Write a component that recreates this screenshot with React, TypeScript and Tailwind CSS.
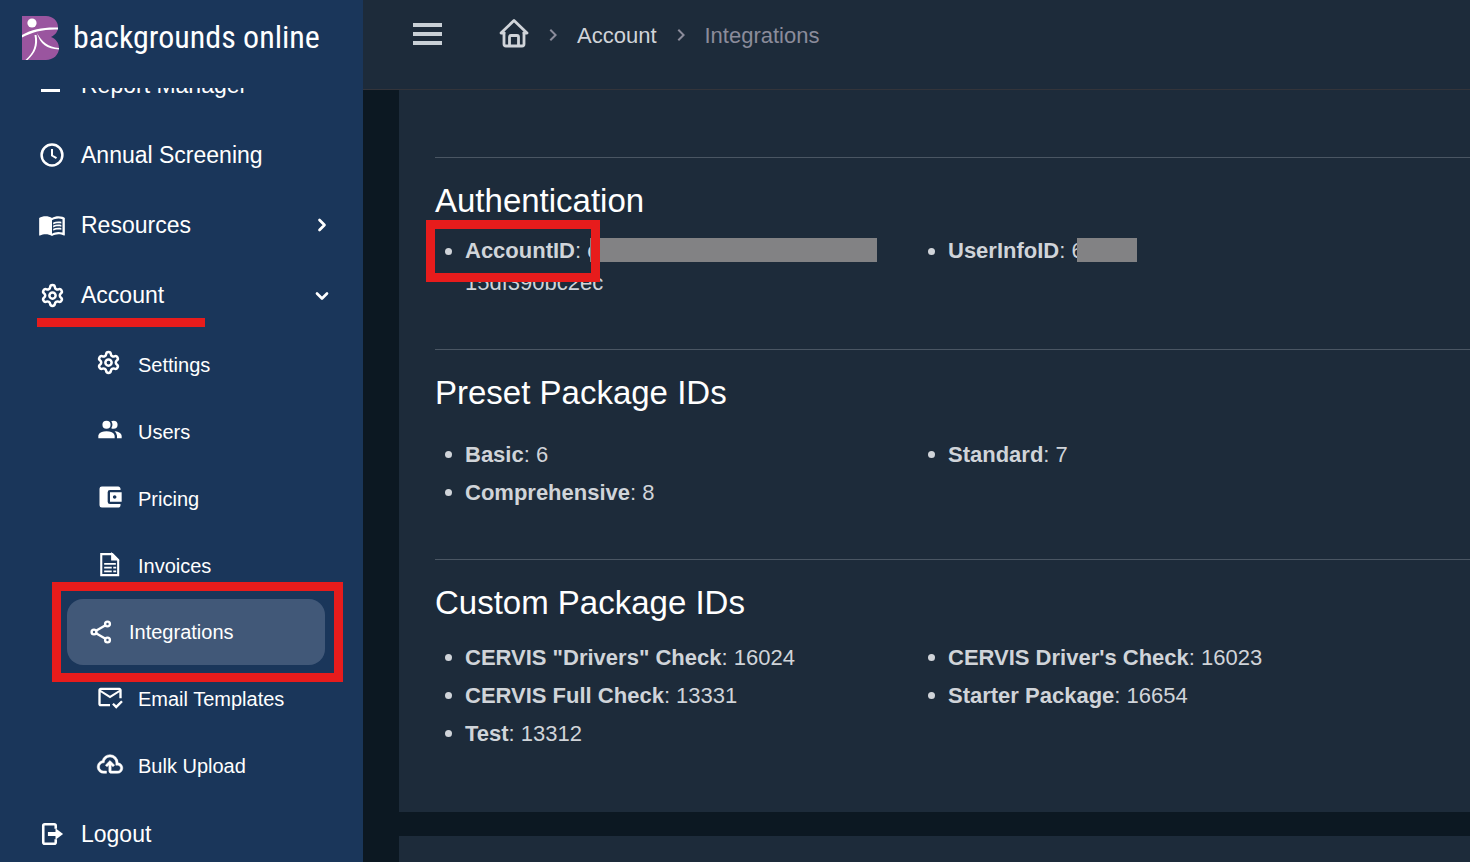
import { ChevronDown, ChevronRight, Settings } from "lucide-react";
import { MdMenuBook, MdAccountBalanceWallet, MdOutlineMarkEmailRead, MdChevronRight } from "react-icons/md";

const HomeIcon = () => (
    <svg width="30" height="30" viewBox="0 0 30 30" fill="none" stroke="currentColor" strokeWidth="2.8" strokeLinejoin="round">
        <path d="M5 15H2L15 2.500 28 15h-3" strokeLinecap="round" />
        <path d="M5 14v12q0 2 2 2h16q2 0 2-2V14" />
        <path d="M10.500 28V19q0-1.500 1.500-1.500h6q1.500 0 1.500 1.500v9" />
    </svg>
);

const ClockIcon = () => (
    <svg width="28" height="28" viewBox="0 0 28 28" fill="none" stroke="currentColor" strokeWidth="2.5">
        <circle cx="14" cy="14" r="10.400" />
        <path d="M14 8v6.500l4.500 2.700" strokeWidth="2" />
    </svg>
);

const UsersIcon = () => (
    <svg width="28" height="28" viewBox="0 0 24 24" fill="currentColor">
        <path d="M16 17V19H2V17S2 13 9 13 16 17 16 17M12.500 7.500A3.500 3.500 0 1 0 9 11A3.500 3.500 0 0 0 12.500 7.500M15.940 13A5.320 5.320 0 0 1 18 17V19H22V17S22 13.370 15.940 13M15 4A3.390 3.390 0 0 0 13.070 4.590A5 5 0 0 1 13.070 10.410A3.390 3.390 0 0 0 15 11A3.500 3.500 0 0 0 15 4Z" />
    </svg>
);

const InvoiceIcon = () => (
    <svg width="28" height="28" viewBox="0 0 24 24" fill="none" stroke="currentColor" strokeWidth="1.8">
        <path d="M4.500 3.500h9.500l5 5V21.500H4.500z" />
        <path d="M13.500 3v5.500h5.500z" fill="currentColor" strokeWidth="1" />
        <path d="M7 11.800h10M7 15.200h6.500M14.800 15.200h2.500M7 18.400h6.500M14.800 18.400h2.500" strokeWidth="1.500" />
    </svg>
);

const ShareIcon = () => (
    <svg width="28" height="28" viewBox="0 0 28 28" fill="none" stroke="currentColor" strokeWidth="2.4">
        <circle cx="7" cy="14" r="2.400" />
        <circle cx="20.500" cy="6" r="2.400" />
        <circle cx="20.500" cy="22" r="2.400" />
        <path d="M9 12.800l9.500-5.600M9 15.200l9.500 5.600" />
    </svg>
);

const CloudIcon = () => (
    <svg width="28" height="28" viewBox="0 -960 960 960" fill="currentColor" stroke="currentColor" strokeWidth="16">
        <path d="M260-160q-91 0-155.500-63T40-377q0-78 47-139t123-78q25-92 100-149t170-57q117 0 198.500 81.500T760-520q69 8 114.500 59.500T920-340q0 75-52.500 127.500T740-160H520q-33 0-56.500-23.500T440-240v-206l-64 62-56-56 160-160 160 160-56 56-64-62v206h220q42 0 71-29t29-71q0-42-29-71t-71-29h-60v-80q0-83-58.500-141.500T480-720q-83 0-141.500 58.500T280-520h-20q-58 0-99 41t-41 99q0 58 41 99t99 41h100v80H260Z" />
    </svg>
);

const LogoutIcon = () => (
    <svg width="28" height="28" viewBox="0 0 24 24" fill="none" stroke="currentColor" strokeWidth="2.2">
        <path d="M15.200 7.500V5q0-1.300-1.300-1.300H5.800Q4.500 3.700 4.500 5v14q0 1.300 1.300 1.300h8.100q1.300 0 1.300-1.300v-2.500" />
        <path d="M8.500 10.200H15V7l6.500 5-6.500 5v-3.200H8.500z" fill="currentColor" stroke="none" />
    </svg>
);

const Logo = () => (
    <svg width="38" height="44" viewBox="0 0 38 44" className="shrink-0">
        <path d="M0 0h24c7 0 12 5 12 11 0 5-3 8-7 10 5 2 8 6 8 11 0 7-6 12-13 12H0z" fill="#9a559f" />
        <circle cx="10" cy="7" r="4.600" fill="#fff" />
        <path d="M0 19C10 13 22 11 36 11.500v2C22 13 10 16 0 21.500z" fill="#fff" />
        <path d="M12.500 19c2 10-1 18-9 25h2c8-7 11-15 9-25z" fill="#fff" />
        <path d="M15 17c5 9 11 14 22 15v1.500C25 33 18 28 15 17z" fill="#fff" />
    </svg>
);

const subItems = [
    { name: "Settings", icon: <Settings size={25} strokeWidth={2.4} className="mr-[3px]" /> },
    { name: "Users", icon: <UsersIcon /> },
    { name: "Pricing", icon: <MdAccountBalanceWallet size={28} /> },
    { name: "Invoices", icon: <InvoiceIcon /> },
    { name: "Integrations", icon: <ShareIcon />, active: true },
    { name: "Email Templates", icon: <MdOutlineMarkEmailRead size={28} /> },
    { name: "Bulk Upload", icon: <CloudIcon /> },
];

const presets = [["Basic", "6"], ["Standard", "7"], ["Comprehensive", "8"]];

const customs = [
    ['CERVIS "Drivers" Check', "16024"],
    ["CERVIS Driver's Check", "16023"],
    ["CERVIS Full Check", "13331"],
    ["Starter Package", "16654"],
    ["Test", "13312"],
];

const IdList = ({ items }: { items: string[][] }) => (
    <ul className="grid grid-cols-[483px_1fr] pl-[10px]">
        {items.map(([label, id]) => (
            <li key={label} className="flex h-[38px] items-center">
                <span className="mr-[13px] size-[7px] shrink-0 rounded-full bg-[#d0d4d9]" />
                <span><b>{label}</b>: {id}</span>
            </li>
        ))}
    </ul>
);

const Sidebar = () => (
    <aside className="flex w-[363px] shrink-0 flex-col bg-[#1a365a] text-white">
        <a href="#" className="flex h-[88px] shrink-0 gap-[13px] pt-4 pl-[22px]">
            <Logo />
            <span className="font-['Roboto_Condensed','Open_Sans_Condensed',Roboto,sans-serif] text-[32px] leading-[42px] whitespace-nowrap">backgrounds online</span>
        </a>
        <nav className="text-[23px]">
            {/* scrolled partly under the logo */}
            <div className="flex h-8 flex-col justify-end overflow-hidden">
                <a href="#" className="-mt-16 mb-[3px] flex h-16 shrink-0 items-center gap-[15px] pl-[38px]">
                    <svg width="28" height="28" viewBox="0 0 28 28"><path d="M3 6h20M3 13h20M3 19.500h19" stroke="currentColor" strokeWidth="3" /></svg>
                    Report Manager
                </a>
            </div>
            <a href="#" className="flex h-[70px] items-center gap-[15px] pl-[38px]"><ClockIcon />Annual Screening</a>
            <button className="flex h-[70px] w-full items-center gap-[15px] pr-[31px] pl-[38px] text-left">
                <MdMenuBook size={28} /><span className="grow">Resources</span><ChevronRight size={20} strokeWidth={3.2} />
            </button>
            <div className="relative">
                <button className="flex h-[71px] w-full items-center gap-[15px] pr-[31px] pl-[38px] text-left">
                    <Settings size={25} strokeWidth={2.4} className="ml-[2px] mr-px" /><span className="grow">Account</span><ChevronDown size={20} strokeWidth={3.2} />
                </button>
                <span className="absolute bottom-1 left-[37px] h-[9px] w-[168px] bg-[#e71c1c]" />
            </div>
            <div className="text-xl">
                {subItems.map((item) => item.active ? (
                    <div key={item.name} className="relative pr-[38px] pl-[67px]">
                        <a href="#" className="flex h-[66px] items-center gap-[14px] rounded-2xl bg-[#415878] pl-5">{item.icon}{item.name}</a>
                        <span className="absolute -inset-y-[17px] right-5 left-[52px] border-[9px] border-[#e71c1c]" />
                    </div>
                ) : (
                    <a key={item.name} href="#" className="flex h-[67px] items-center pl-24">
                        <span className="mr-[14px] flex w-7 justify-center pb-1">{item.icon}</span>{item.name}
                    </a>
                ))}
            </div>
            <a href="#" className="flex h-[70px] items-center gap-[15px] pl-[38px]"><LogoutIcon />Logout</a>
        </nav>
    </aside>
);

const App = () => {
    return (
        <div className="flex h-screen overflow-hidden bg-[#0c1822] font-['Liberation_Sans',sans-serif]">
            <Sidebar />
            <div className="flex min-w-0 grow flex-col">
                <header className="flex h-[90px] shrink-0 items-start border-b border-[#33343a] bg-[#1d2b3a] pt-4 pl-[50px] text-[22px] text-[#d0d4d9]">
                    <button aria-label="Menu" className="flex h-9 flex-col justify-center gap-[5px]">
                        <span className="h-1 w-[29px] bg-[#c9d0d6]" />
                        <span className="h-1 w-[29px] bg-[#c9d0d6]" />
                        <span className="h-1 w-[29px] bg-[#c9d0d6]" />
                    </button>
                    <nav className="ml-[57px] flex h-[38px] items-center">
                        <a href="#" aria-label="Home" className="pb-1"><HomeIcon /></a>
                        <MdChevronRight size={24} className="mx-3 text-[#8b8c9b]" />
                        <a href="#">Account</a>
                        <MdChevronRight size={24} className="mx-3 text-[#8b8c9b]" />
                        <span className="text-[#8b8c9b]">Integrations</span>
                    </nav>
                </header>
                <main className="pl-9 text-[22px] text-[#d0d4d9]">
                    <div className="bg-[#1d2b3a] pt-[67px] pl-9">
                        <section className="h-48 border-t border-[#4a5663] pt-[23px]">
                            <h2 className="text-[33px] leading-10 text-white">Authentication</h2>
                            <ul className="grid grid-cols-[483px_1fr] pt-[14px] pl-[10px]">
                                <li className="relative flex">
                                    <span className="mt-[13px] mr-[13px] size-[7px] shrink-0 rounded-full bg-[#d0d4d9]" />
                                    <div className="leading-8"><b>AccountID</b>: c<br />15df390bc2ec</div>
                                    <span className="absolute top-[3px] left-[145px] h-6 w-[287px] bg-[#828284]" />
                                    <span className="absolute -top-[15px] -left-[19px] h-[62px] w-[174px] border-[9px] border-[#e71c1c]" />
                                </li>
                                <li className="relative flex">
                                    <span className="mt-[13px] mr-[13px] size-[7px] shrink-0 rounded-full bg-[#d0d4d9]" />
                                    <div className="leading-8"><b>UserInfoID</b>: 6</div>
                                    <span className="absolute top-[3px] left-[149px] h-6 w-[60px] bg-[#828284]" />
                                </li>
                            </ul>
                        </section>
                        <section className="h-[210px] border-t border-[#4a5663] pt-[23px]">
                            <h2 className="mb-[22px] text-[33px] leading-10 text-white">Preset Package IDs</h2>
                            <IdList items={presets} />
                        </section>
                        <section className="h-[253px] border-t border-[#4a5663] pt-[23px]">
                            <h2 className="mb-[15px] text-[33px] leading-10 text-white">Custom Package IDs</h2>
                            <IdList items={customs} />
                        </section>
                    </div>
                    <div className="mt-6 h-20 bg-[#1d2b3a]" />
                </main>
            </div>
        </div>
    );
};

export default App;
